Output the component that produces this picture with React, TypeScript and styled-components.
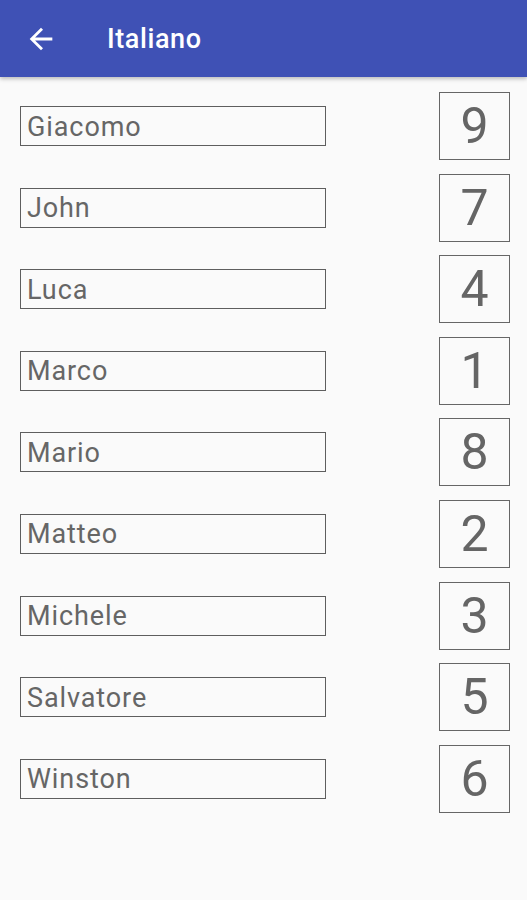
import React, { FunctionComponent } from "react";
import styled, { createGlobalStyle } from "styled-components";

const GlobalStyle = createGlobalStyle`
  html, body {
    margin: 0;
    padding: 0;
    background: #fafafa;
    font-family: Roboto, "Liberation Sans", sans-serif;
  }
`;

type Player = {
  name: string;
  number: number;
};

const players: Player[] = [
  { name: "Giacomo", number: 9 },
  { name: "John", number: 7 },
  { name: "Luca", number: 4 },
  { name: "Marco", number: 1 },
  { name: "Mario", number: 8 },
  { name: "Matteo", number: 2 },
  { name: "Michele", number: 3 },
  { name: "Salvatore", number: 5 },
  { name: "Winston", number: 6 },
];

const Screen = styled.div`
  width: 527px;
  height: 900px;
  background: #fafafa;
  display: flex;
  flex-direction: column;
`;

const AppBar = styled.header`
  height: 77px;
  flex-shrink: 0;
  background: #3f51b5;
  display: flex;
  align-items: center;
  box-shadow: 0 2px 4px rgba(0, 0, 0, 0.25);
  position: relative;
  z-index: 1;
`;

const BackButton = styled.button`
  width: 34px;
  height: 34px;
  margin-left: 24px;
  padding: 0;
  border: none;
  background: transparent;
  display: flex;
  align-items: center;
  justify-content: center;
  cursor: pointer;
`;

const Title = styled.h1`
  margin: 0 0 0 49px;
  color: #ffffff;
  font-size: 27px;
  font-weight: 500;
  letter-spacing: 0.6px;
`;

const List = styled.div`
  display: flex;
  flex-direction: column;
  gap: 13.6px;
  padding-top: 15px;
`;

const Row = styled.div`
  display: flex;
  align-items: center;
  justify-content: space-between;
  padding: 0 17px 0 20px;
`;

const NameBox = styled.div`
  width: 306px;
  height: 40px;
  box-sizing: border-box;
  border: 1.5px solid #5e5e5e;
  padding: 2px 7px 0 6px;
  display: flex;
  align-items: center;
  font-size: 27px;
  letter-spacing: 0.9px;
  color: #666666;
  line-height: 1;
`;

const NumberBox = styled.div`
  width: 71px;
  height: 68px;
  box-sizing: border-box;
  border: 1.5px solid #666666;
  display: flex;
  align-items: center;
  justify-content: center;
  font-size: 50px;
  color: #656565;
  line-height: 1;
`;

const App: FunctionComponent = () => {
  return (
    <>
      <GlobalStyle />
      <Screen>
        <AppBar>
          <BackButton type="button" aria-label="back">
            <svg width="34" height="34" viewBox="0 0 24 24" fill="#ffffff">
              <path d="M20 11H7.83l5.59-5.59L12 4l-8 8 8 8 1.41-1.41L7.83 13H20v-2z" />
            </svg>
          </BackButton>
          <Title>Italiano</Title>
        </AppBar>
        <List>
          {players.map((p) => (
            <Row key={p.name}>
              <NameBox>{p.name}</NameBox>
              <NumberBox>{p.number}</NumberBox>
            </Row>
          ))}
        </List>
      </Screen>
    </>
  );
};

export default App;
